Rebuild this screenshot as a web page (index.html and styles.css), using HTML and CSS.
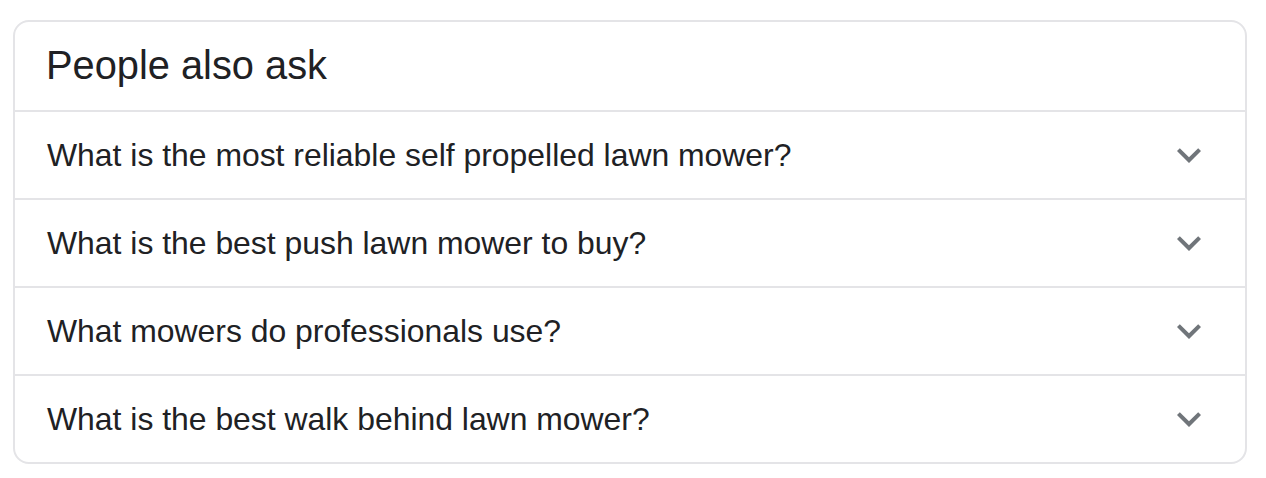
FILE: index.html
```html
<!DOCTYPE html>
<html lang="en">
<head>
<meta charset="utf-8">
<title>People also ask</title>
<link rel="stylesheet" href="styles.css">
</head>
<body>
<section class="paa">
  <h2 class="paa-title">People also ask</h2>
  <div class="paa-item">
    <span class="paa-q">What is the most reliable self propelled lawn mower?</span>
    <svg class="chev" viewBox="0 0 24 24" width="48" height="48"><path d="M16.59 8.59L12 13.17 7.41 8.59 6 10l6 6 6-6z"/></svg>
  </div>
  <div class="paa-item">
    <span class="paa-q">What is the best push lawn mower to buy?</span>
    <svg class="chev" viewBox="0 0 24 24" width="48" height="48"><path d="M16.59 8.59L12 13.17 7.41 8.59 6 10l6 6 6-6z"/></svg>
  </div>
  <div class="paa-item">
    <span class="paa-q">What mowers do professionals use?</span>
    <svg class="chev" viewBox="0 0 24 24" width="48" height="48"><path d="M16.59 8.59L12 13.17 7.41 8.59 6 10l6 6 6-6z"/></svg>
  </div>
  <div class="paa-item">
    <span class="paa-q">What is the best walk behind lawn mower?</span>
    <svg class="chev" viewBox="0 0 24 24" width="48" height="48"><path d="M16.59 8.59L12 13.17 7.41 8.59 6 10l6 6 6-6z"/></svg>
  </div>
</section>
</body>
</html>
```
FILE: styles.css
```css
html, body {
  margin: 0;
  padding: 0;
  background: #ffffff;
}
body {
  padding: 20px 0 0 13px;
  font-family: Arial, "Liberation Sans", Helvetica, sans-serif;
  color: #202124;
}
.paa {
  width: 1234px;
  box-sizing: border-box;
  border: 2px solid #e4e4e7;
  border-radius: 16px;
  display: flex;
  flex-direction: column;
}
.paa-title {
  margin: 0;
  height: 88px;
  padding: 0 32px 0 31px;
  display: flex;
  align-items: center;
  font-size: 39.8px;
  font-weight: normal;
  line-height: 1.15;
  border-bottom: 2px solid #e4e4e7;
}
.paa-item {
  height: 86px;
  padding: 0 32px 0 32px;
  display: flex;
  align-items: center;
  justify-content: space-between;
  border-bottom: 2px solid #e4e4e7;
}
.paa-item:last-child {
  border-bottom: none;
}
.paa-q {
  font-size: 31.9px;
  line-height: 1.2;
}
.chev {
  flex: none;
  fill: #70757a;
}
```
